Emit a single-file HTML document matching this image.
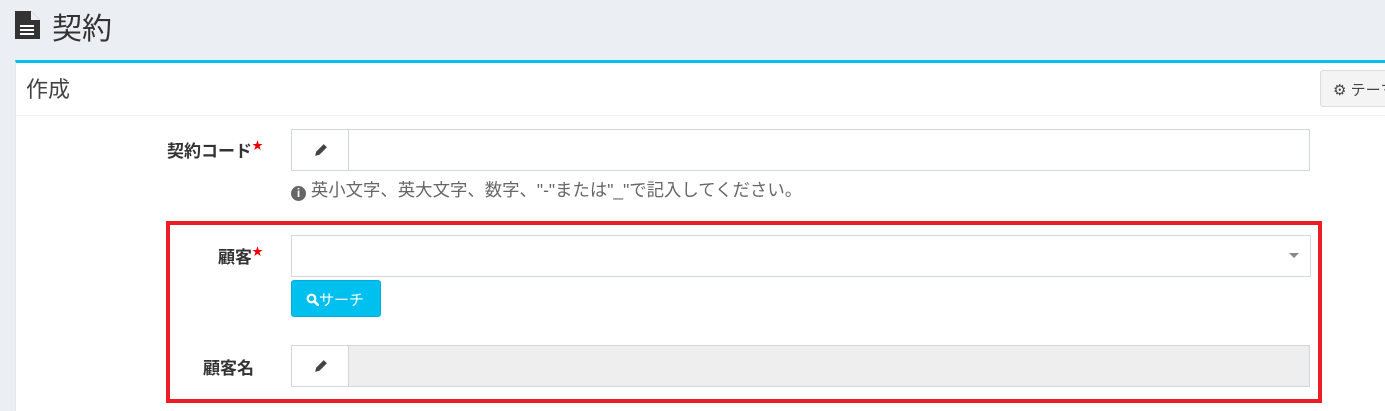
<!DOCTYPE html>
<html><head><meta charset="utf-8"><style>
*{box-sizing:border-box;margin:0;padding:0}
html,body{width:1385px;height:411px;overflow:hidden}
body{background:#ebeef3;font-family:"Liberation Sans","Noto Sans CJK JP",sans-serif;position:relative;color:#333}
.abs{position:absolute}
.panel{left:15px;top:60px;width:1400px;height:360px;background:#fff;border-top:3px solid #00c0ef;border-left:1px solid #e4e7ec}
.inp{border:1px solid #d2d6de;background:#fff}
.addon{border:1px solid #d2d6de;background:#fff;display:flex;align-items:center;justify-content:center}
.lbl{font-size:17px;font-weight:bold;color:#333;text-align:right}
.req{color:#e00;font-size:11px;vertical-align:top}
</style></head><body>
<svg class="abs" style="left:14px;top:10px" width="27" height="30" viewBox="0 0 27 30"><path d="M1 1h16l9 9v19H1z" fill="#333"/><path d="M17 1v9h9" fill="#ebeef3"/><rect x="6" y="15" width="14" height="2" fill="#fff"/><rect x="6" y="19" width="14" height="2" fill="#fff"/><rect x="6" y="23" width="14" height="2" fill="#fff"/></svg>
<div class="abs" style="left:52px;top:4px;font-size:30px;color:#333">契約</div>
<div class="abs panel"></div>
<div class="abs" style="left:16px;top:115px;width:1380px;height:1px;background:#f0f0f0"></div>
<div class="abs" style="left:26px;top:72px;font-size:22px;color:#444">作成</div>
<div class="abs" style="left:1320px;top:70px;width:80px;height:37px;background:#f4f4f4;border:1px solid #ddd;border-radius:3px;font-size:15px;padding:8px 0 0 12px;color:#444">⚙ テーマ</div>

<div class="abs lbl" style="left:150px;top:137px;width:113px">契約コード<span class="req">★</span></div>
<div class="abs addon" style="left:291px;top:129px;width:58px;height:42px"><svg width="15" height="15" viewBox="0 0 14 14"><path d="M2 12l1-4 7-7 3 3-7 7z" fill="#444"/></svg></div>
<div class="abs inp" style="left:348px;top:129px;width:962px;height:42px"></div>
<div class="abs" style="left:291px;top:177px;font-size:17.4px;color:#666"><span style="display:inline-block;width:15px;height:15px;border-radius:50%;background:#666;color:#fff;font-size:12px;text-align:center;line-height:15px;font-weight:bold;vertical-align:-1px">i</span> 英小文字、英大文字、数字、"-"または"_"で記入してください。</div>

<div class="abs" style="left:166px;top:221px;width:1156px;height:182px;border:4px solid #ec1c24"></div>
<div class="abs lbl" style="left:150px;top:243px;width:113px">顧客<span class="req">★</span></div>
<div class="abs inp" style="left:291px;top:235px;width:1020px;height:42px"></div>
<div class="abs" style="left:1289px;top:253px;width:0;height:0;border-left:5px solid transparent;border-right:5px solid transparent;border-top:5px solid #888"></div>
<div class="abs" style="left:291px;top:280px;width:90px;height:37px;background:#00c0ef;border:1px solid #00acd6;border-radius:3px;color:#fff;font-size:15px;padding:8px 0 0 14px;white-space:nowrap"><svg width="13" height="13" viewBox="0 0 13 13" style="vertical-align:-1px"><circle cx="5.5" cy="5.5" r="3.8" fill="none" stroke="#fff" stroke-width="2.2"/><path d="M8.3 8.3l3.5 3.5" stroke="#fff" stroke-width="2.6" stroke-linecap="round"/></svg>サーチ</div>

<div class="abs lbl" style="left:150px;top:354px;width:104px">顧客名</div>
<div class="abs addon" style="left:291px;top:345px;width:58px;height:42px"><svg width="15" height="15" viewBox="0 0 14 14"><path d="M2 12l1-4 7-7 3 3-7 7z" fill="#444"/></svg></div>
<div class="abs inp" style="left:348px;top:345px;width:962px;height:42px;background:#eee"></div>
</body></html>
